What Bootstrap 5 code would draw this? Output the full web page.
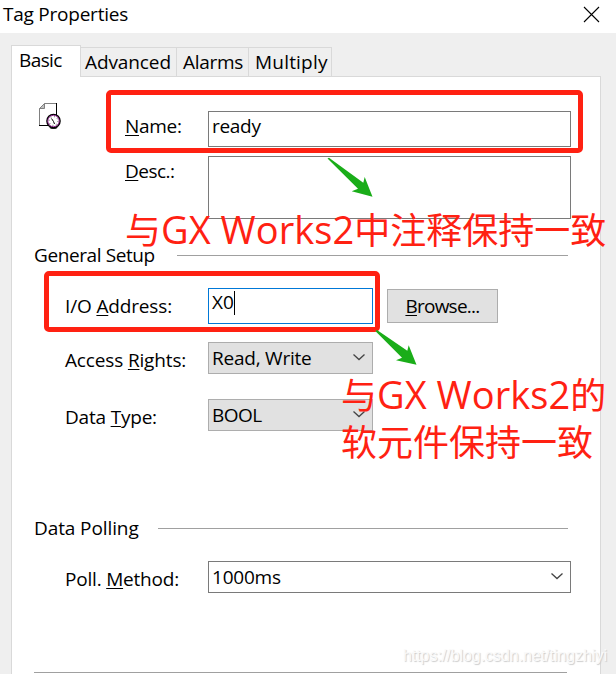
<!DOCTYPE html>
<html lang="en">
<head>
<meta charset="utf-8">
<meta name="viewport" content="width=device-width, initial-scale=1">
<title>Tag Properties</title>
<link href="https://cdn.jsdelivr.net/npm/bootstrap@5.3.0/dist/css/bootstrap.min.css" rel="stylesheet">
<style>
body{width:616px;height:674px;background:#efefef;color:#000;font:19px/26px "Open Sans","Noto Sans",sans-serif;letter-spacing:-.3px}
.titlebar{height:33px;padding:1px 3px 0}
.s-title{letter-spacing:-.23px}
.tabs{height:44px;padding:12px 0 0 11px;margin-bottom:-1px;z-index:1}
.tab{border:1px solid #d9d9d9;border-left:0;height:30px;margin-top:2px;padding-top:1px}
.tab.on{height:32px;margin-top:0;border-left:1px solid #d9d9d9;border-bottom:0;background:#fff;width:70px;padding:1px 0 0 7px;letter-spacing:-.6px}
.t2{width:96px;padding-left:4px;letter-spacing:-.1px}.t3{width:72px;padding-left:6px}.t4{width:83px;padding-left:6px;letter-spacing:.2px}
.sheet{margin:0 15px 0 11px;border:1px solid #d9d9d9;border-bottom:0;height:598px;width:590px}
.line-row{padding-left:53px}
.lbl{width:143px}
.lbl.near{width:83px;margin-left:60px}
.box{border:1px solid #7a7a7a;background:#fff;border-radius:0;padding:0 0 0 3px;width:363px}
.short{width:165px}
.grey{background:#e1e1e1;border-color:#adadad}
.focus{border-color:#0078d7}
.focus span{letter-spacing:0}
.caret{width:1px;height:24px;background:#000;margin:2px 0 0 0}
.chev{margin-right:7px}
.rule{height:1px;background:#a0a0a0}
u{text-decoration-thickness:1px;text-underline-offset:2px;text-decoration-skip-ink:none}
.ic{flex:none}
.r1{height:79px}
.f1{margin-top:36px}.f2{margin-top:34px;height:36px;padding-top:1px}
.r2 .lbl{margin-left:113px;margin-top:2px;letter-spacing:-.5px}.f3{height:63px}
.r3{margin-top:23px;padding-left:22px;height:26px}.sec{white-space:nowrap;width:100px;letter-spacing:-.4px}
.g1{width:391px;margin:13px 32px 0 auto}
.r4{margin-top:20px}.r4 .lbl{margin-top:5px;letter-spacing:-.15px}.f4{height:36px}
.browse{border:1px solid #adadad;width:111px;height:34px;margin:1px 0 0 14px;line-height:26px;letter-spacing:-.75px}
.combo{height:32px;padding-bottom:1px}
.combo .chev{margin-top:-1px}
.r5{margin-top:18px}.r5 .lbl,.r6 .lbl{margin-top:5px}.r5 .lbl{letter-spacing:-.15px}.r5 .box,.r8 .box{letter-spacing:-.22px}
.r6{margin-top:25px}.r6 .lbl{letter-spacing:-.2px}
.r6 .box{letter-spacing:-.5px}
.r7{margin-top:84px;padding-left:22px}.r7 .sec{letter-spacing:-.1px}.g2{width:410px;margin:13px 32px 0 auto}
.r8{margin-top:20px}.r8 .lbl{margin-top:5px;letter-spacing:-.2px}
.g3{width:533px;margin:79px 0 0 22px}
.mark-box{border:5px solid #ff2112;border-radius:5px}
.m1{left:106px;top:90px;width:477px;height:63px}
.m2{left:44px;top:271px;width:336px;height:61px}
.note{color:#ff2112;font:36px/46px "Noto Sans CJK SC",sans-serif;letter-spacing:0;white-space:nowrap}
.note span{font:38px/46px "Open Sans",sans-serif;letter-spacing:.05px}
.n1{left:125px;top:205px}
.n2{left:341px;top:370px}
.wm{right:9px;top:644px;font:15.900px/24px "Liberation Sans",sans-serif;color:#fafafa;text-shadow:1px 1px 1px #ccc;letter-spacing:0}
</style>
</head>
<body class="position-relative overflow-hidden">
<header class="titlebar bg-white d-flex justify-content-between"><span class="s-title">Tag Properties</span>
<svg width="32" height="32" viewBox="581 1 32 32"><path d="M584 7l15 15M599 7l-15 15" stroke="#000" stroke-width="1.1" fill="none"/></svg></header>
<nav class="tabs d-flex position-relative">
<div class="tab on">Basic</div><div class="tab t2">Advanced</div><div class="tab t3">Alarms</div><div class="tab t4">Multiply</div>
</nav>
<main class="sheet bg-white">
<div class="d-flex r1">
<svg class="ic" width="53" height="60" viewBox="12 77 53 60"><path d="M39.500 108.500L44.500 103.500H56.500V125.500H39.500Z" fill="#fff" stroke="#808080"/><path d="M39.500 108.500h5v-5z" fill="#c0c0c0" stroke="#808080"/><path d="M56.500 103v12M39 125.500h9" stroke="#000"/><ellipse cx="53.500" cy="127" rx="4" ry="2" fill="#222"/><circle cx="53.500" cy="121" r="6.600" fill="#fff" stroke="#000" stroke-width="1.400"/><circle cx="53.500" cy="121" r="5.700" fill="none" stroke="#800080" stroke-width=".8"/><circle cx="53.500" cy="121" r="4.400" fill="none" stroke="#444" stroke-width=".9" stroke-dasharray=".9 2.550"/><path d="M51.500 118.500l2 3 1 2.500" stroke="#000" fill="none"/></svg>
<div class="lbl near f1"><u>N</u>ame:</div><div class="box f2">ready</div></div>
<div class="d-flex r2"><div class="lbl near"><u>D</u>esc.:</div><div class="box f3"></div></div>
<div class="d-flex r3"><span class="sec">General Setup</span><div class="rule g1"></div></div>
<div class="d-flex line-row r4"><div class="lbl">I/O <u>A</u>ddress:</div><div class="box short focus d-flex f4"><span>X0</span><i class="caret"></i></div><button class="browse grey p-0"><u>B</u>rowse...</button></div>
<div class="d-flex line-row r5"><div class="lbl">Access <u>R</u>ights:</div><div class="box short grey combo d-flex justify-content-between align-items-center"><span>Read, Write</span><svg class="chev" width="12" height="8"><path d="M.5 1.500L6 6.500 11.500 1.500" fill="none" stroke="#444" stroke-width="1.300"/></svg></div></div>
<div class="d-flex line-row r6"><div class="lbl">Data <u>T</u>ype:</div><div class="box short grey combo d-flex justify-content-between align-items-center"><span>BOOL</span><svg class="chev" width="12" height="8"><path d="M.5 1.500L6 6.500 11.500 1.500" fill="none" stroke="#444" stroke-width="1.300"/></svg></div></div>
<div class="d-flex r7"><span class="sec">Data Polling</span><div class="rule g2"></div></div>
<div class="d-flex line-row r8"><div class="lbl">Poll. <u>M</u>ethod:</div><div class="box combo d-flex justify-content-between align-items-center"><span>1000ms</span><svg class="chev" width="12" height="8"><path d="M.5 1.500L6 6.500 11.500 1.500" fill="none" stroke="#444" stroke-width="1.300"/></svg></div></div>
<div class="rule g3"></div>
</main>
<div class="mark-box m1 position-absolute"></div>
<div class="mark-box m2 position-absolute"></div>
<div class="note n1 position-absolute">与<span>GX Works2</span>中注释保持一致</div>
<div class="note n2 position-absolute">与<span>GX Works2</span>的<br>软元件保持一致</div>
<svg class="position-absolute top-0 start-0 pe-none" width="616" height="674"><g fill="#1aad19"><path d="M327.500 158.500L329 157.700 363.300 182.700 364.700 177 372.500 196.700 351.700 191.300 358 188.700Z"/><path d="M375.300 331L377 330 407.300 350.700 408.700 345.300 416.500 364.700 396 360.300 402 357.700Z"/></g></svg>
<div class="wm position-absolute">https://blog.csdn.net/tingzhiyi</div>
<script src="https://cdn.jsdelivr.net/npm/bootstrap@5.3.0/dist/js/bootstrap.bundle.min.js"></script>
</body>
</html>
